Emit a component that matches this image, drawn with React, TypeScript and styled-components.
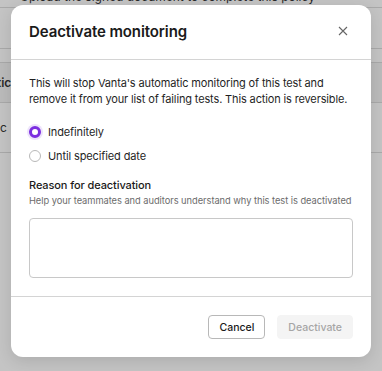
import styled, { createGlobalStyle } from 'styled-components'

const Global = createGlobalStyle`
  html, body { margin: 0; padding: 0; }
  body {
    font-family: Inter, "Noto Sans", "Liberation Sans", sans-serif;
    background: #fff;
    -webkit-font-smoothing: antialiased;
  }
`

const Page = styled.div`
  position: relative;
  width: 382px;
  height: 371px;
  overflow: hidden;
  background: #fff;
`

const Backdrop = styled.div`
  display: flex;
  flex-direction: column;
  font-size: 12px;
  color: #222;
  margin-top: -15px;
`

const BgRow = styled.div<{ h: number; shade?: boolean }>`
  height: ${p => p.h}px;
  flex-shrink: 0;
  border-bottom: 1px solid #d8d8d8;
  background: ${p => (p.shade ? '#f2f2f2' : '#fff')};
  display: flex;
  align-items: center;
  white-space: nowrap;
  box-sizing: border-box;
`

const BgText = styled.span<{ bold?: boolean; shift?: number }>`
  margin-left: ${p => p.shift ?? -10}px;
  font-weight: ${p => (p.bold ? 600 : 400)};
`

const Overlay = styled.div`
  position: absolute;
  inset: 0;
  background: rgba(60, 60, 60, 0.3);
  display: flex;
  justify-content: center;
  align-items: flex-start;
  padding-top: 5px;
`

const Modal = styled.div`
  width: 360px;
  height: 352px;
  background: #fff;
  border-radius: 12px;
  box-shadow: 0 4px 16px rgba(0, 0, 0, 0.12);
  display: flex;
  flex-direction: column;
  box-sizing: border-box;
  overflow: hidden;
`

const Header = styled.div`
  height: 55px;
  flex-shrink: 0;
  box-sizing: border-box;
  display: flex;
  align-items: center;
  justify-content: space-between;
  padding: 0 20px 2px 18px;
  border-bottom: 1px solid #d4d4d4;
`

const Title = styled.h2`
  margin: 0;
  font-size: 15px;
  font-weight: 600;
  color: #1a1a1a;
  letter-spacing: -0.1px;
`

const CloseButton = styled.button`
  border: none;
  background: none;
  padding: 0;
  width: 16px;
  height: 16px;
  display: flex;
  align-items: center;
  justify-content: center;
  cursor: pointer;
`

const Body = styled.div`
  flex: 1;
  padding: 16px 18px 0 18px;
  display: flex;
  flex-direction: column;
  border-bottom: 1px solid #d4d4d4;
`

const Lead = styled.p`
  margin: 0;
  font-size: 11px;
  letter-spacing: -0.14px;
  line-height: 15.5px;
  color: #1f1f1f;
`

const Options = styled.div`
  display: flex;
  flex-direction: column;
  gap: 8px;
  margin-top: 17px;
`

const Option = styled.label`
  display: flex;
  align-items: center;
  gap: 7px;
  font-size: 11px;
  letter-spacing: -0.12px;
  color: #1f1f1f;
  height: 16px;
`

const Radio = styled.span<{ checked?: boolean }>`
  width: 12px;
  height: 12px;
  border-radius: 50%;
  box-sizing: border-box;
  border: ${p => (p.checked ? '3.5px solid #7b2ee0' : '1px solid #b8b8b8')};
  background: #fff;
  box-shadow: ${p => (p.checked ? '0 0 0 2px #ede3fb' : 'none')};
`

const FieldLabel = styled.div`
  margin-top: 13px;
  font-size: 11px;
  letter-spacing: -0.1px;
  font-weight: 500;
  color: #1a1a1a;
  line-height: 16px;
`

const Hint = styled.div`
  margin-top: 1px;
  font-size: 9.3px;
  letter-spacing: -0.04px;
  color: #6b6b6b;
  line-height: 14px;
  white-space: nowrap;
`

const TextArea = styled.textarea`
  margin-top: 10px;
  height: 60px;
  box-sizing: border-box;
  border: 1px solid #c8c8c8;
  border-radius: 4px;
  resize: none;
  font-family: inherit;
  outline: none;
`

const Footer = styled.div`
  height: 60px;
  flex-shrink: 0;
  display: flex;
  justify-content: flex-end;
  align-items: center;
  gap: 12px;
  padding: 0 18px;
`

const Button = styled.button<{ disabled?: boolean }>`
  height: 24px;
  padding: 0 10px;
  border-radius: 4px;
  font-family: inherit;
  font-size: 10.5px;
  font-weight: 500;
  border: 1px solid ${p => (p.disabled ? '#f4f4f4' : '#b8b8b8')};
  background: ${p => (p.disabled ? '#f4f4f4' : '#fff')};
  color: ${p => (p.disabled ? '#a6a6a6' : '#1a1a1a')};
`

export default function App() {
  return (
    <Page>
      <Global />
      <Backdrop>
        <BgRow h={23}><BgText shift={20}>Upload the signed document to complete this policy</BgText></BgRow>
        <BgRow h={41}><BgText>v</BgText></BgRow>
        <BgRow h={14} />
        <BgRow h={40} shade><BgText bold>atic</BgText></BgRow>
        <BgRow h={50}><BgText>olc</BgText></BgRow>
      </Backdrop>
      <Overlay>
        <Modal>
          <Header>
            <Title>Deactivate monitoring</Title>
            <CloseButton aria-label="Close">
              <svg width="10" height="10" viewBox="0 0 10 10">
                <path d="M1 1L9 9M9 1L1 9" stroke="#666" strokeWidth="1.1" />
              </svg>
            </CloseButton>
          </Header>
          <Body>
            <Lead>
              This will stop Vanta's automatic monitoring of this test and<br />
              remove it from your list of failing tests. This action is reversible.
            </Lead>
            <Options>
              <Option><Radio checked />Indefinitely</Option>
              <Option><Radio />Until specified date</Option>
            </Options>
            <FieldLabel>Reason for deactivation</FieldLabel>
            <Hint>Help your teammates and auditors understand why this test is deactivated</Hint>
            <TextArea />
          </Body>
          <Footer>
            <Button>Cancel</Button>
            <Button disabled>Deactivate</Button>
          </Footer>
        </Modal>
      </Overlay>
    </Page>
  )
}
